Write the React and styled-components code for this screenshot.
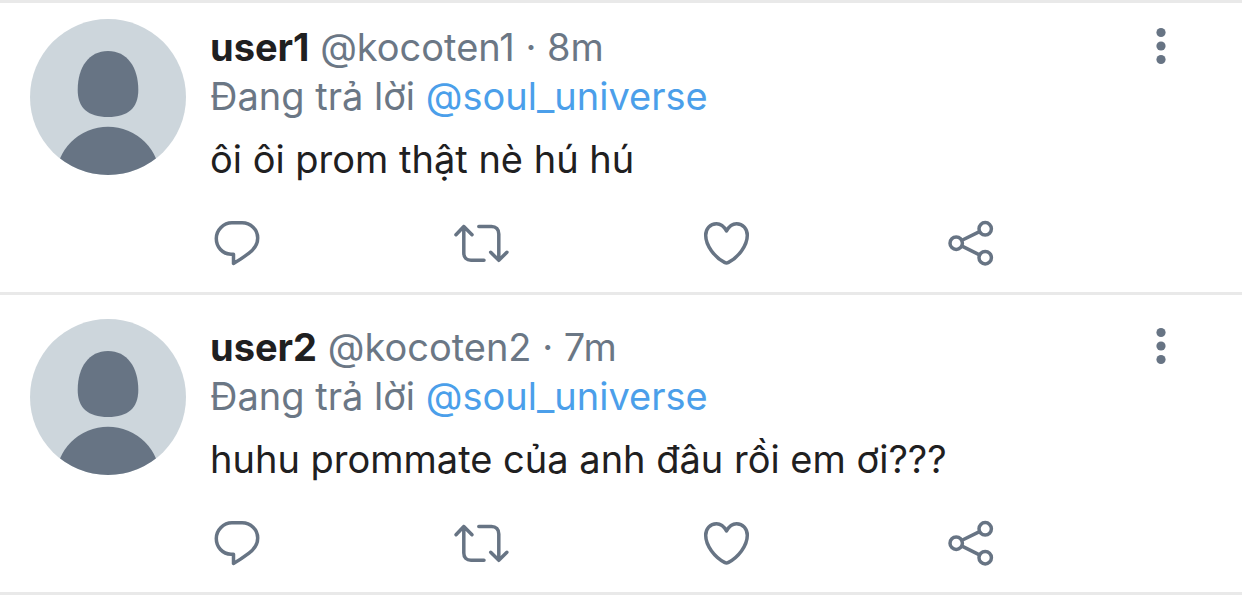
import React from 'react';
import styled, { createGlobalStyle } from 'styled-components';

const GlobalStyle = createGlobalStyle`
  * {
    box-sizing: border-box;
  }

  body {
    margin: 0;
    background-color: #ffffff;
    color: #1f2021;
    font-family: Inter, 'Noto Sans', sans-serif;
    font-size: 38px;
    line-height: 49px;
  }
`;

const Feed = styled.main`
  border-top: 3px solid #e9e9e9;
`;

const Tweet = styled.article`
  display: flex;
  gap: 24px;
  padding: 24px 51px 23px 30px;
  border-bottom: 3px solid #e9e9e9;

  &:first-child {
    padding-top: 16px;
  }
`;

const AvatarIcon = styled.svg`
  flex: none;
  width: 156px;
  height: 156px;
  border-radius: 50%;
  background-color: #cdd6dc;
  fill: #677484;
`;

const Content = styled.div`
  flex: 1;
  min-width: 0;
  padding-top: 4px;
`;

const Header = styled.header`
  display: flex;
  justify-content: space-between;
  align-items: flex-start;
`;

const Muted = styled.div`
  color: #6b7785;
`;

const Name = styled.strong`
  font-weight: 700;
  color: #1f2021;
`;

const Mention = styled.a`
  color: #4b9fea;
  text-decoration: none;
`;

const Message = styled.p`
  margin: 14px 0 33px;
`;

const IconButton = styled.button`
  display: flex;
  align-items: center;
  justify-content: center;
  width: ${({ $width }) => $width || 54}px;
  padding: 0;
  border: none;
  background: none;
  color: #677484;
  cursor: pointer;
`;

const MoreButton = styled(IconButton)`
  height: 46px;
`;

const Actions = styled.div`
  display: grid;
  grid-template-columns: repeat(4, 1fr);
`;

const Icon = styled.svg`
  display: block;
  width: 52px;
  height: 52px;
  overflow: visible;
  fill: none;
  stroke: currentColor;
  stroke-width: 3.5;
  stroke-linecap: round;
  stroke-linejoin: round;
`;

const DotsIcon = styled.svg`
  width: 10px;
  height: 38px;
  fill: currentColor;
`;

const Avatar = () => (
  <AvatarIcon viewBox='0 0 156 156' role='img' aria-label='Avatar'>
    <path d='M78 32C97 32 108.300 48 108.300 71C108.300 89 98 98 78 98C58 98 47.700 89 47.700 71C47.700 48 59 32 78 32Z' />
    <circle cx='78' cy='160' r='52.200' />
  </AvatarIcon>
);

const actions = [
  {
    label: 'Reply',
    shape: (
      <path d='M22.500 46.500V37.200H20C11.500 37.200 5.300 30 5.300 21.500S12.500 5.800 21 5.800H31C39.700 5.800 46.700 12.500 46.700 21C46.700 27.500 43.500 32 38 36.200C33 40 28 43.500 22.500 46.500Z' />
    ),
  },
  {
    label: 'Retweet',
    shape: (
      <>
        <path d='M0 17.700L7.800 9.500L16 17.700M7.800 9.500V36C7.800 40.500 10.500 43.300 15 43.300H28' />
        <path d='M22.800 9.500H35.500C40 9.500 42.800 12.500 42.800 17V43.300M34.700 35.300L42.800 43.300L50.900 35.300' />
      </>
    ),
  },
  {
    label: 'Like',
    shape: (
      <path d='M24.500 14C22 9.500 18.500 6.800 14.500 6.800C8 6.800 3.700 12 3.700 18.300C3.700 29 13 40.500 22.500 45.400Q24.500 46.400 26.500 45.400C36 40.500 45.300 29 45.300 18.300C45.300 12 41 6.800 34.500 6.800C30.500 6.800 27 9.500 24.500 14Z' />
    ),
  },
  {
    label: 'Share',
    shape: (
      <>
        <circle cx='9.200' cy='26.200' r='6.200' />
        <circle cx='38.200' cy='11.800' r='6.200' />
        <circle cx='38.200' cy='40.700' r='6.200' />
        <path d='M15 23.300L32.500 14.600M15 29.100L32.500 37.900' />
      </>
    ),
  },
];

const tweets = [
  {
    name: 'user1',
    handle: '@kocoten1',
    time: '8m',
    text: 'ôi ôi prom thật nè hú hú',
  },
  {
    name: 'user2',
    handle: '@kocoten2',
    time: '7m',
    text: 'huhu prommate của anh đâu rồi em ơi???',
  },
];

const TweetItem = ({ tweet }) => (
  <Tweet>
    <Avatar />
    <Content>
      <Header>
        <Muted>
          <Name>{tweet.name}</Name> {tweet.handle} · {tweet.time}
        </Muted>
        <MoreButton $width={60} aria-label='More'>
          <DotsIcon viewBox='0 0 10 38'>
            <circle cx='5' cy='5.500' r='4.600' />
            <circle cx='5' cy='19' r='4.600' />
            <circle cx='5' cy='32.500' r='4.600' />
          </DotsIcon>
        </MoreButton>
      </Header>
      <Muted>
        Đang trả lời <Mention href='#soul_universe'>@soul_universe</Mention>
      </Muted>
      <Message>{tweet.text}</Message>
      <Actions>
        {actions.map(({ label, shape }) => (
          <IconButton key={label} aria-label={label}>
            <Icon viewBox='0 0 52 52'>{shape}</Icon>
          </IconButton>
        ))}
      </Actions>
    </Content>
  </Tweet>
);

const App = () => (
  <>
    <GlobalStyle />
    <Feed>
      {tweets.map((tweet) => (
        <TweetItem key={tweet.handle} tweet={tweet} />
      ))}
    </Feed>
  </>
);

export default App;
